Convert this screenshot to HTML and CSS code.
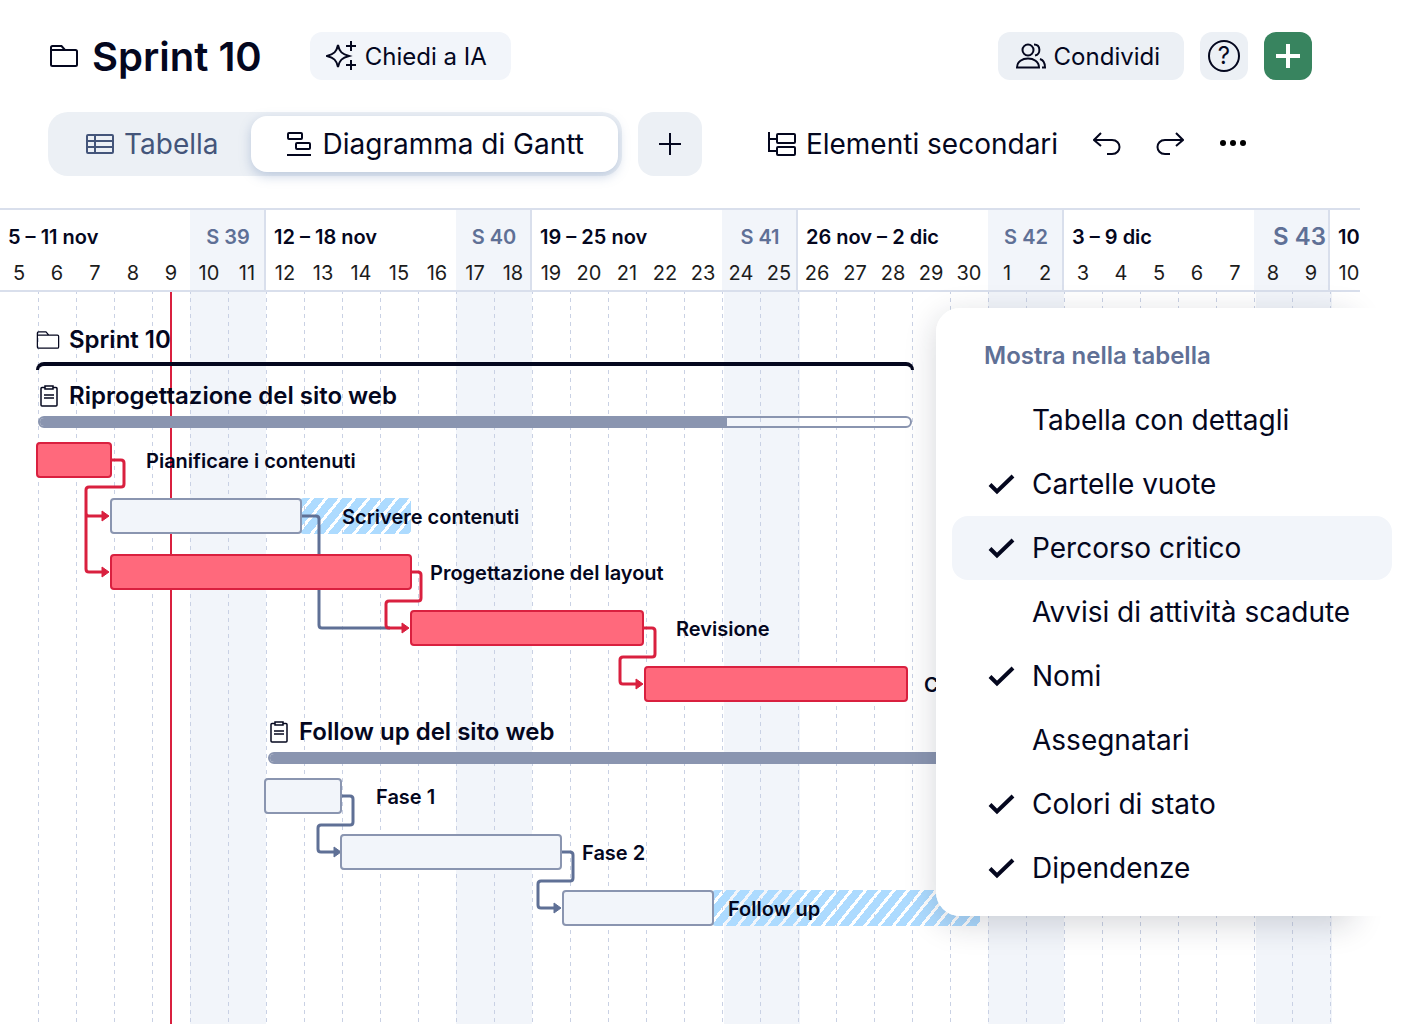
FILE: index.html
```html
<!DOCTYPE html>
<html lang="it">
<head>
    <meta charset="UTF-8">
    <meta name="viewport" content="width=device-width, initial-scale=1.0">
    <title>Sprint 10 - Diagramma di Gantt</title>
    <link rel="stylesheet" href="styles.css">
</head>
<body>
    <!-- Icone condivise -->
    <svg class="sprites" aria-hidden="true">
        <symbol id="folder" viewBox="0 0 28 22">
            <path d="M1 20V2.5Q1 1 2.5 1H11.5L15 5H25.5Q27 5 27 6.5V19.5Q27 21 25.5 21H2.5Q1 21 1 19.5ZM1 5H15"/>
        </symbol>
        <symbol id="clipboard" viewBox="0 0 18 22">
            <path d="M5 2.5H2Q1 2.5 1 3.5V20Q1 21 2 21H16Q17 21 17 20V3.5Q17 2.5 16 2.5H13M5 1H13V4H5ZM4 10H14M4 13H14"/>
        </symbol>
        <symbol id="check" viewBox="0 0 28 28">
            <path d="M2 14.5L9 21.5L25 6"/>
        </symbol>
    </svg>

    <header class="top">
        <svg class="line-icon" width="28" height="22"><use href="#folder"/></svg>
        <h1>Sprint 10</h1>
        <button class="btn btn-ai">
            <svg class="line-icon" width="30" height="30" viewBox="0 0 30 30">
                <path d="M12 4C13.500 11 16 13 23 15C16 17 13.500 19 12 26C10.500 19 8 17 1 15C8 13 10.500 11 12 4ZM25 0V10M20 5H30M25 19V29M20 24H30"/>
            </svg>
            Chiedi a IA
        </button>
        <div class="top-actions">
            <button class="btn">
                <svg class="line-icon" width="30" height="26" viewBox="0 0 30 26">
                    <circle cx="12" cy="7" r="5.5"/>
                    <path d="M1 24.5C1 12.5 23 12.5 23 24.5ZM18 1.5C25 1.5 25 11.5 19 12.5M24 16C27 17 29 20 29 24.5H26"/>
                </svg>
                Condividi
            </button>
            <button class="btn btn-square" aria-label="Aiuto"><span class="help">?</span></button>
            <button class="btn btn-square btn-add" aria-label="Nuovo">
                <svg width="24" height="24" viewBox="0 0 24 24"><path d="M12 0V24M0 12H24"/></svg>
            </button>
        </div>
    </header>

    <nav class="toolbar">
        <div class="tabs">
            <button class="tab">
                <svg class="line-icon" width="28" height="20" viewBox="0 0 28 20">
                    <rect x="1" y="1" width="26" height="18" rx="1"/>
                    <path d="M1 7H27M1 13H27M9 1V19"/>
                </svg>
                Tabella
            </button>
            <button class="tab selected">
                <svg class="line-icon" width="26" height="24" viewBox="0 0 26 24">
                    <rect x="1" y="1" width="14" height="6" rx="1"/>
                    <rect x="9" y="11" width="14" height="6" rx="1"/>
                    <path d="M0 23H24"/>
                </svg>
                Diagramma di Gantt
            </button>
        </div>
        <button class="add-view" aria-label="Aggiungi vista">
            <svg class="line-icon" width="22" height="22" viewBox="0 0 22 22"><path d="M11 0V22M0 11H22"/></svg>
        </button>
        <div class="tools">
            <button class="tool">
                <svg class="line-icon" width="28" height="26" viewBox="0 0 28 26">
                    <path d="M1 1V20H9M1 8H9"/>
                    <rect x="9" y="3" width="18" height="9" rx="1"/>
                    <rect x="9" y="16" width="18" height="8" rx="1"/>
                </svg>
                Elementi secondari
            </button>
            <button class="tool" aria-label="Annulla">
                <svg class="line-icon" width="28" height="24" viewBox="0 0 28 24"><path d="M8 1L1 8L8 14M1 8H19C29 8 29 22 19 22H14"/></svg>
            </button>
            <button class="tool" aria-label="Ripeti">
                <svg class="line-icon" width="28" height="24" viewBox="0 0 28 24"><path d="M20 1L27 8L20 14M27 8H9C-1 8 -1 22 9 22H14"/></svg>
            </button>
            <button class="tool" aria-label="Altro">
                <svg width="28" height="8" viewBox="0 0 28 8"><circle cx="4" cy="3" r="3"/><circle cx="14" cy="3" r="3"/><circle cx="24" cy="3" r="3"/></svg>
            </button>
        </div>
    </nav>

    <main class="gantt">
        <!-- Settimane e giorni -->
        <div class="calendar">
            <div class="week">
                <span class="range">5 – 11 nov</span><span class="number">S 39</span>
                <span>5</span><span>6</span><span>7</span><span>8</span><span>9</span><span class="off">10</span><span class="off">11</span>
            </div>
            <div class="week">
                <span class="range">12 – 18 nov</span><span class="number">S 40</span>
                <span>12</span><span>13</span><span>14</span><span>15</span><span>16</span><span class="off">17</span><span class="off">18</span>
            </div>
            <div class="week">
                <span class="range">19 – 25 nov</span><span class="number">S 41</span>
                <span>19</span><span>20</span><span>21</span><span>22</span><span>23</span><span class="off">24</span><span class="off">25</span>
            </div>
            <div class="week">
                <span class="range">26 nov – 2 dic</span><span class="number">S 42</span>
                <span>26</span><span>27</span><span>28</span><span>29</span><span>30</span><span class="off">1</span><span class="off">2</span>
            </div>
            <div class="week">
                <span class="range">3 – 9 dic</span><span class="number large">S 43</span>
                <span>3</span><span>4</span><span>5</span><span>6</span><span>7</span><span class="off">8</span><span class="off">9</span>
            </div>
            <div class="week">
                <span class="range">10</span><span class="number"></span>
                <span>10</span>
            </div>
        </div>

        <div class="chart">
            <svg class="grid" aria-hidden="true">
                <defs>
                    <pattern id="days" width="38" height="8" patternUnits="userSpaceOnUse">
                        <rect width="1" height="2"/>
                        <rect y="6" width="1" height="2"/>
                    </pattern>
                </defs>
                <g class="weekends">
                    <rect x="190" width="76" height="100%"/>
                    <rect x="456" width="76" height="100%"/>
                    <rect x="724" width="76" height="100%"/>
                    <rect x="988" width="76" height="100%"/>
                    <rect x="1256" width="76" height="100%"/>
                </g>
                <rect x="38" width="1293" height="100%" fill="url(#days)"/>
                <rect class="today" x="170" width="2" height="100%"/>
            </svg>

            <!-- Dipendenze tra le attività -->
            <svg class="links" aria-hidden="true">
                <g class="link">
                    <path d="M302 224H316Q319 224 319 227V333Q319 336 322 336H390"/>
                    <path d="M342 504H350Q353 504 353 507V530Q353 533 350 533H321Q318 533 318 536V557Q318 560 321 560H336"/>
                    <path d="M562 560H570Q573 560 573 563V586Q573 589 570 589H541Q538 589 538 592V613Q538 616 541 616H556"/>
                    <path class="head" d="M334 555V565L341 560ZM554 611V621L561 616Z"/>
                </g>
                <g class="link critical">
                    <path d="M112 168H121Q124 168 124 171V192Q124 195 121 195H89Q86 195 86 198V277Q86 280 89 280H104M86 221Q86 224 89 224H104"/>
                    <path d="M412 280H418Q421 280 421 283V306Q421 309 418 309H389Q386 309 386 312V333Q386 336 389 336H404"/>
                    <path d="M644 336H652Q655 336 655 339V362Q655 365 652 365H623Q620 365 620 368V389Q620 392 623 392H638"/>
                    <path class="head" d="M102 219V229L109 224ZM102 275V285L109 280ZM402 331V341L409 336ZM636 387V397L643 392Z"/>
                </g>
            </svg>

            <div class="row group" style="--start: 36px; --length: 878px">
                <div class="name"><svg class="thin-icon" width="24" height="18"><use href="#folder"/></svg>Sprint 10</div>
                <div class="bracket"></div>
            </div>
            <div class="row group" style="--start: 38px; --length: 874px">
                <div class="name"><svg class="thin-icon" width="22" height="22"><use href="#clipboard"/></svg>Riprogettazione del sito web</div>
                <div class="progress"><div class="done" style="width: 79%"></div></div>
            </div>
            <div class="row">
                <div class="bar critical" style="--start: 36px; --length: 76px"></div>
                <span class="label" style="--start: 146px">Pianificare i contenuti</span>
            </div>
            <div class="row">
                <div class="delay" style="--start: 300px; --length: 111px"></div>
                <div class="bar" style="--start: 110px; --length: 192px"></div>
                <span class="label" style="--start: 342px">Scrivere contenuti</span>
            </div>
            <div class="row">
                <div class="bar critical" style="--start: 110px; --length: 302px"></div>
                <span class="label" style="--start: 430px">Progettazione del layout</span>
            </div>
            <div class="row">
                <div class="bar critical" style="--start: 410px; --length: 234px"></div>
                <span class="label" style="--start: 676px">Revisione</span>
            </div>
            <div class="row">
                <div class="bar critical" style="--start: 644px; --length: 264px"></div>
                <span class="label" style="--start: 924px">C</span>
            </div>
            <div class="row group" style="--start: 268px; --length: 720px">
                <div class="name"><svg class="thin-icon" width="22" height="22"><use href="#clipboard"/></svg>Follow up del sito web</div>
                <div class="progress"><div class="done" style="width: 100%"></div></div>
            </div>
            <div class="row">
                <div class="bar" style="--start: 264px; --length: 78px"></div>
                <span class="label" style="--start: 376px">Fase 1</span>
            </div>
            <div class="row">
                <div class="bar" style="--start: 340px; --length: 222px"></div>
                <span class="label" style="--start: 582px">Fase 2</span>
            </div>
            <div class="row">
                <div class="delay" style="--start: 712px; --length: 268px"></div>
                <div class="bar" style="--start: 562px; --length: 152px"></div>
                <span class="label" style="--start: 728px">Follow up</span>
            </div>
        </div>
    </main>

    <!-- Menu delle opzioni di visualizzazione -->
    <aside class="menu">
        <h2>Mostra nella tabella</h2>
        <label class="option"><input type="checkbox"><svg width="28" height="28"><use href="#check"/></svg>Tabella con dettagli</label>
        <label class="option"><input type="checkbox" checked><svg width="28" height="28"><use href="#check"/></svg>Cartelle vuote</label>
        <label class="option active"><input type="checkbox" checked><svg width="28" height="28"><use href="#check"/></svg>Percorso critico</label>
        <label class="option"><input type="checkbox"><svg width="28" height="28"><use href="#check"/></svg>Avvisi di attività scadute</label>
        <label class="option"><input type="checkbox" checked><svg width="28" height="28"><use href="#check"/></svg>Nomi</label>
        <label class="option"><input type="checkbox"><svg width="28" height="28"><use href="#check"/></svg>Assegnatari</label>
        <label class="option"><input type="checkbox" checked><svg width="28" height="28"><use href="#check"/></svg>Colori di stato</label>
        <label class="option"><input type="checkbox" checked><svg width="28" height="28"><use href="#check"/></svg>Dipendenze</label>
    </aside>
</body>
</html>
```
FILE: styles.css
```css
* {
    box-sizing: border-box;
}

body {
    margin: 0;
    min-height: 100vh;
    display: flex;
    flex-direction: column;
    position: relative;
    overflow: hidden;
    background-color: #ffffff;
    color: #04071e;
    font-family: Inter, "Liberation Sans", sans-serif;
    font-size: 28px;
    font-optical-sizing: none;
}

button {
    border: none;
    background: none;
    padding: 0;
    color: inherit;
    font: inherit;
    white-space: nowrap;
    cursor: pointer;
    display: flex;
    align-items: center;
}

svg {
    flex: none;
    display: block;
}

.sprites {
    position: absolute;
    width: 0;
    height: 0;
}

.line-icon {
    fill: none;
    stroke: currentColor;
    stroke-width: 2;
}

/* Intestazione */
.top {
    display: flex;
    align-items: center;
    height: 112px;
    padding: 0 96px 0 50px;
}

h1 {
    margin: 0 48px 0 14px;
    font-size: 40px;
    font-weight: 600;
    white-space: nowrap;
}

.btn {
    height: 48px;
    padding: 0 24px 0 18px;
    gap: 8px;
    border-radius: 12px;
    background-color: #ecf0f5;
    font-size: 24px;
}

.btn-ai {
    padding-left: 16px;
    gap: 9px;
    background-color: #f2f5fa;
}

.btn-square {
    width: 48px;
    padding: 0;
    justify-content: center;
}

.top-actions {
    display: flex;
    gap: 16px;
    margin-left: auto;
}

.help {
    width: 32px;
    height: 32px;
    border: 2px solid;
    border-radius: 50%;
    font-size: 24px;
    line-height: 28px;
}

.btn-add {
    background-color: #38845f;
}

.btn-add svg {
    stroke: #ffffff;
    stroke-width: 4;
}

/* Barra delle viste */
.toolbar {
    display: flex;
    align-items: center;
    padding: 0 48px;
    margin-bottom: 32px;
}

.tabs {
    display: flex;
    height: 64px;
    padding: 4px;
    border-radius: 20px;
    background-color: #ecf0f5;
}

.tab {
    padding: 0 32px 0 34px;
    gap: 10px;
    border-radius: 16px;
    color: #44557a;
}

.tab.selected {
    padding: 0 34px 0 36px;
    background-color: #ffffff;
    color: #04071e;
    box-shadow: 0 4px 12px rgba(95, 125, 175, 0.35);
}

.add-view {
    width: 64px;
    height: 64px;
    margin-left: 16px;
    justify-content: center;
    border-radius: 16px;
    background-color: #ecf0f5;
}

.tools {
    display: flex;
    gap: 35px;
    margin-left: 66px;
}

.tool {
    gap: 10px;
}

/* Calendario */
.gantt {
    flex: 1;
    display: flex;
    flex-direction: column;
    margin-right: 48px;
    overflow: hidden;
}

.calendar {
    display: flex;
    height: 84px;
    border-top: 2px solid #d9dfec;
    border-bottom: 2px solid #d9dfec;
    overflow: hidden;
}

.week {
    flex: none;
    display: grid;
    grid-template-columns: repeat(7, 38px);
    grid-template-rows: 44px 36px;
    width: 266px;
    border-right: 2px solid #d9dfec;
    overflow: hidden;
    font-size: 20px;
    line-height: 38px;
    text-align: center;
    color: #1c1c1c;
}

.week .range {
    grid-column: span 5;
    padding: 8px 0 0 8px;
    font-weight: 600;
    text-align: left;
    color: #04071e;
}

.week .number {
    grid-column: span 2;
    padding-top: 8px;
    font-weight: 600;
    color: #5f7096;
    background-color: #f2f5fa;
}

.week .large {
    padding-right: 4px;
    font-size: 24px;
    text-align: right;
}

.week .off {
    background-color: #f2f5fa;
}

/* Diagramma */
.chart {
    flex: 1;
    position: relative;
    padding-top: 28px;
}

.grid,
.links {
    position: absolute;
    top: 0;
    left: 0;
    width: 100%;
    height: 100%;
}

.weekends {
    fill: #f2f5fa;
}

#days {
    fill: #c9d1e4;
}

.today {
    fill: #d9203f;
}

.links {
    z-index: 2;
}

.link {
    fill: none;
    stroke: #5f7096;
    stroke-width: 3;
}

.link .head {
    fill: #5f7096;
    stroke-width: 1;
    stroke-linejoin: round;
}

.link.critical {
    stroke: #d9203f;
}

.link.critical .head {
    fill: #d9203f;
}

.row {
    display: grid;
    align-items: center;
    height: 56px;
}

.row > * {
    grid-area: 1 / 1;
    margin-left: var(--start);
}

.bar,
.delay {
    position: relative;
    width: var(--length);
    height: 36px;
}

.bar {
    z-index: 3;
    border: 2px solid #8a95b0;
    border-radius: 4px;
    background-color: #f2f5fa;
}

.bar.critical {
    border-color: #d9203f;
    background-color: #ff697c;
}

.delay {
    z-index: 1;
    border-radius: 4px;
    background: repeating-linear-gradient(129deg, #addbff 0, #addbff 8px, transparent 8px, transparent 11px);
}

.label {
    position: relative;
    z-index: 4;
    padding-top: 2px;
    font-size: 20px;
    font-weight: 600;
    white-space: nowrap;
}

.row.group {
    display: block;
    position: relative;
}

.name {
    display: flex;
    align-items: center;
    gap: 9px;
    height: 40px;
    font-size: 24px;
    font-weight: 600;
    line-height: 28px;
    white-space: nowrap;
}

.thin-icon {
    fill: none;
    stroke: currentColor;
    stroke-width: 1.5;
}

.bracket {
    width: var(--length);
    height: 8px;
    margin-top: 2px;
    border: solid #04071e;
    border-width: 4px 3px 0;
    border-radius: 8px 8px 0 0;
}

.progress {
    width: var(--length);
    height: 12px;
    border: 2px solid #8a95b0;
    border-radius: 6px;
    overflow: hidden;
}

.progress .done {
    height: 100%;
    background-color: #8a95b0;
}

/* Menu */
.menu {
    position: absolute;
    z-index: 10;
    top: 308px;
    right: 0;
    width: 472px;
    padding: 16px;
    border-radius: 24px 0 0 24px;
    background-color: #ffffff;
}

.menu::before {
    content: "";
    position: absolute;
    z-index: -1;
    inset: 0 56px 0 0;
    border-radius: inherit;
    box-shadow: 0 8px 32px rgba(20, 25, 50, 0.18);
}

.menu::after {
    content: "";
    position: absolute;
    z-index: -1;
    inset: 0;
    border-radius: inherit;
    background-color: #ffffff;
}

.menu h2 {
    margin: 0;
    padding-left: 32px;
    font-size: 24px;
    font-weight: 600;
    line-height: 64px;
    color: #5f7096;
}

.option {
    display: flex;
    align-items: center;
    gap: 16px;
    height: 64px;
    padding-left: 36px;
    border-radius: 16px;
    white-space: nowrap;
    cursor: pointer;
}

.option.active {
    background-color: #f2f5fa;
}

.option input {
    position: absolute;
    appearance: none;
    margin: 0;
    width: 28px;
    height: 28px;
}

.option svg {
    visibility: hidden;
    fill: none;
    stroke: #04071e;
    stroke-width: 4;
}

.option input:checked + svg {
    visibility: visible;
}
```
